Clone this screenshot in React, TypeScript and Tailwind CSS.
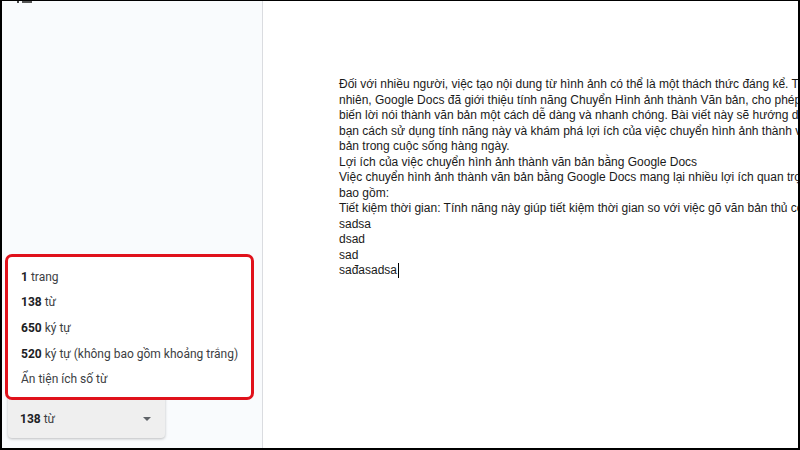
import { ChevronDown } from "lucide-react";

const docLines = [
  "Đối với nhiều người, việc tạo nội dung từ hình ảnh có thể là một thách thức đáng kể. Tuy",
  "nhiên, Google Docs đã giới thiệu tính năng Chuyển Hình ảnh thành Văn bản, cho phép bạn",
  "biến lời nói thành văn bản một cách dễ dàng và nhanh chóng. Bài viết này sẽ hướng dẫn",
  "bạn cách sử dụng tính năng này và khám phá lợi ích của việc chuyển hình ảnh thành văn",
  "bản trong cuộc sống hàng ngày.",
  "Lợi ích của việc chuyển hình ảnh thành văn bản bằng Google Docs",
  "Việc chuyển hình ảnh thành văn bản bằng Google Docs mang lại nhiều lợi ích quan trọng,",
  "bao gồm:",
  "Tiết kiệm thời gian: Tính năng này giúp tiết kiệm thời gian so với việc gõ văn bản thủ công.",
  "sadsa",
  "dsad",
  "sad",
];

const stats = [
  { num: "1", label: "trang" },
  { num: "138", label: "từ" },
  { num: "650", label: "ký tự" },
  { num: "520", label: "ký tự (không bao gồm khoảng trắng)" },
];

export default function App() {
  return (
    <div className="w-[800px] h-[450px] flex border-t border-l-2 border-r-2 border-b-2 border-black bg-white overflow-hidden">
      {/* side panel */}
      <div className="w-[261px] shrink-0 h-full flex flex-col bg-[#f9fbfd] border-r border-[#dadce0] font-['Roboto',sans-serif]">
        <div className="h-[3px] flex items-start gap-[3px] pl-[15px]">
          <span className="w-[2px] h-[2px] bg-[#444]" />
          <span className="w-[10px] h-[2px] bg-[#555]" />
        </div>
        <div className="flex-1" />
        <div className="relative ml-[3px] w-[249px] h-[146px] rounded-[7px] border-[3px] border-[#e0111b] bg-white flex flex-col pl-[13px] pt-[7px] text-[12px] text-[#3c4043] z-10">
          {stats.map((s) => (
            <div key={s.num} className="h-[25.6px] flex items-center">
              <span className="font-bold text-[#202124]">{s.num}</span>
              <span className="ml-[3px]">{s.label}</span>
            </div>
          ))}
          <div className="h-[25.6px] flex items-center">Ẩn tiện ích số từ</div>
        </div>
        <div className="ml-[6px] -mt-[6px] w-[157px] h-[44px] rounded-b-[4px] bg-[#efefef] shadow-[0_1px_3px_rgba(0,0,0,0.25)] flex items-center justify-between pl-[12px] pr-[14px] pt-[5px] text-[12px] text-[#3c4043]">
          <div>
            <span className="font-bold text-[#202124]">138</span>
            <span className="ml-[3px]">từ</span>
          </div>
          <span className="w-0 h-0 border-l-[4px] border-r-[4px] border-t-[4px] border-l-transparent border-r-transparent border-t-[#5f6368]" />
        </div>
        <div className="h-[10px]" />
      </div>

      {/* document */}
      <div className="flex-1 h-full overflow-hidden pl-[76px] pt-[76px] font-['Liberation_Sans',Arial,sans-serif] text-[12px] text-[#1a1a1a]">
        {docLines.map((l, i) => (
          <div key={i} className="h-[15.5px] leading-[15.5px] whitespace-nowrap">
            {l}
          </div>
        ))}
        <div className="h-[15.5px] leading-[15.5px] whitespace-nowrap flex items-center">
          sađasadsa
          <span className="inline-block w-[1px] h-[15px] bg-black ml-[1px]" />
        </div>
      </div>
    </div>
  );
}
